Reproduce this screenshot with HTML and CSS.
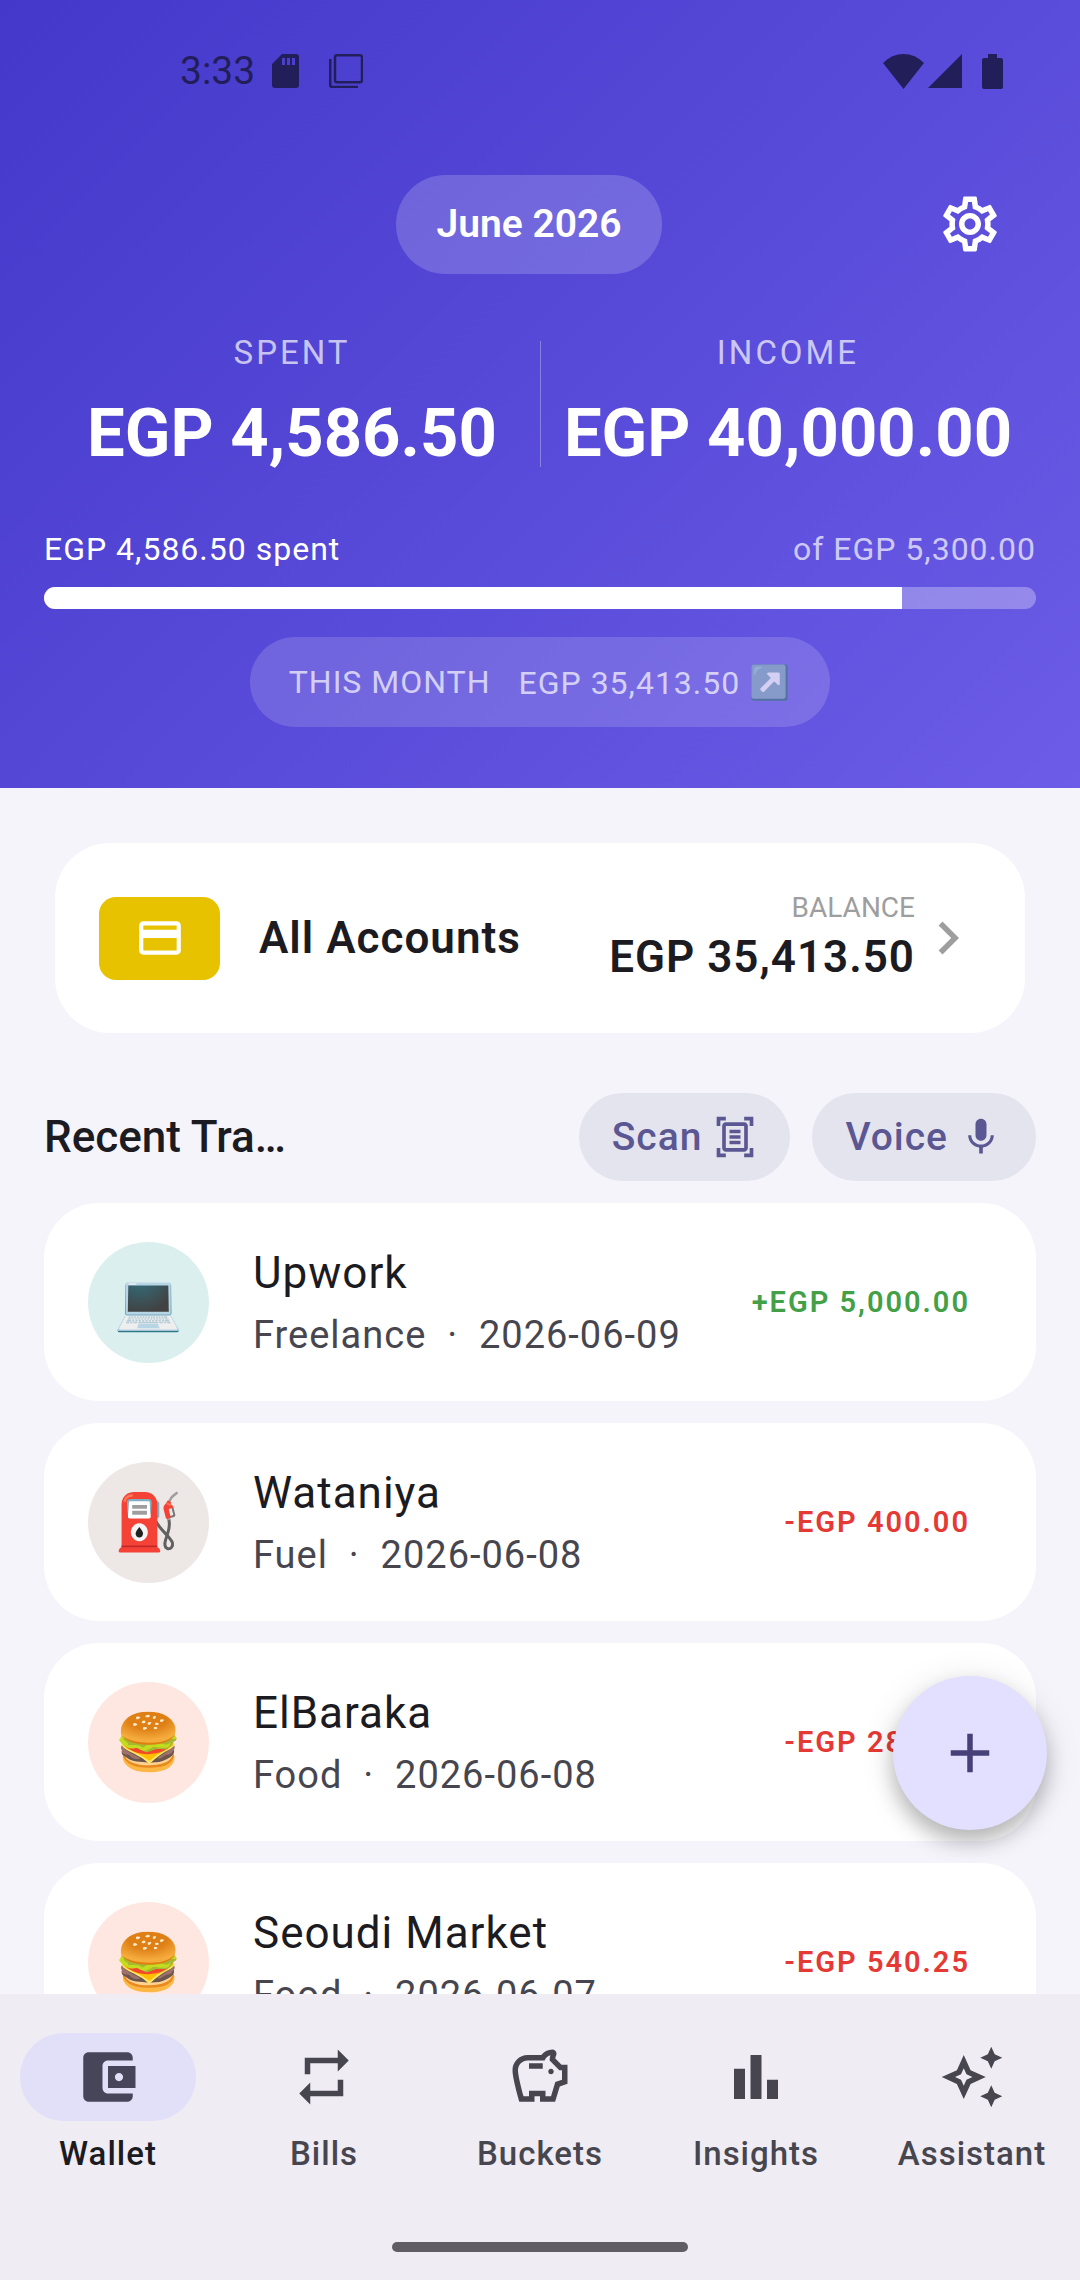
FILE: index.html
```html
<!DOCTYPE html>
<html lang="en">
<head>
<meta charset="utf-8">
<meta name="viewport" content="width=device-width, initial-scale=1">
<title>Wallet</title>
<link rel="stylesheet" href="styles.css">
</head>
<body>
<div class="app">
  <main class="scroll">
    <header class="hero">
      <div class="status">
        <div class="status-left">
          <span class="clock">3:33</span>
          <svg class="sd" viewBox="0 0 27 34" aria-hidden="true"><path fill-rule="evenodd" d="M10 0h14a3 3 0 0 1 3 3v28a3 3 0 0 1-3 3H3a3 3 0 0 1-3-3V10zM10 4v7h3V4zm5 0v7h3V4zm5 0v7h3V4z"/></svg>
          <svg class="copy" viewBox="0 0 34 34" aria-hidden="true"><path fill="none" stroke="currentColor" stroke-width="2.500" d="M8 1.250h23a2 2 0 0 1 2 2v23a2 2 0 0 1-2 2H8a2 2 0 0 1-2-2v-23a2 2 0 0 1 2-2zM1.250 5v26a2 2 0 0 0 2 2H29"/></svg>
        </div>
        <div class="status-right">
          <svg class="wifi" viewBox="0 0 41 35" aria-hidden="true"><path d="M0 9Q9 0 20.500 0T41 9L20.500 35z"/></svg>
          <svg class="signal" viewBox="0 0 34 34" aria-hidden="true"><path d="M34 0v34H0z"/></svg>
          <svg class="battery" viewBox="0 0 21 35" aria-hidden="true"><path d="M6 0h9v4h4a2 2 0 0 1 2 2v27a2 2 0 0 1-2 2H2a2 2 0 0 1-2-2V6a2 2 0 0 1 2-2h4z"/></svg>
        </div>
      </div>

      <div class="toolbar">
        <button class="month" type="button">June 2026</button>
        <button class="icon-button" type="button" aria-label="Settings">
          <svg class="icon" viewBox="0 0 24 24" aria-hidden="true"><path d="M19.430 12.980c.04-.32.07-.64.07-.98 0-.34-.03-.66-.07-.98l2.110-1.650c.19-.15.24-.42.12-.64l-2-3.460c-.09-.16-.26-.25-.44-.25-.06 0-.12.01-.17.03l-2.490 1c-.52-.4-1.080-.73-1.690-.98l-.38-2.650C14.460 2.180 14.250 2 14 2h-4c-.25 0-.46.18-.49.42l-.38 2.650c-.61.25-1.170.59-1.690.98l-2.490-1c-.06-.02-.12-.03-.18-.03-.17 0-.34.09-.43.25l-2 3.460c-.13.22-.07.49.12.64l2.110 1.650c-.04.32-.07.65-.07.98 0 .33.03.66.07.98l-2.110 1.650c-.19.15-.24.42-.12.64l2 3.460c.09.16.26.25.44.25.06 0 .12-.01.17-.03l2.490-1c.52.4 1.080.73 1.690.98l.38 2.650c.03.24.24.42.49.42h4c.25 0 .46-.18.49-.42l.38-2.650c.61-.25 1.170-.59 1.690-.98l2.490 1c.06.02.12.03.18.03.17 0 .34-.09.43-.25l2-3.460c.12-.22.07-.49-.12-.64l-2.110-1.650zm-1.980-1.710c.04.31.05.52.05.73 0 .21-.02.43-.05.73l-.14 1.130.89.7 1.080.84-.7 1.210-1.270-.51-1.040-.42-.9.68c-.43.32-.84.56-1.250.73l-1.060.43-.16 1.130-.2 1.350h-1.400l-.19-1.350-.16-1.130-1.060-.43c-.43-.18-.83-.41-1.230-.71l-.91-.7-1.060.43-1.270.51-.7-1.210 1.080-.84.89-.7-.14-1.130c-.03-.31-.05-.54-.05-.74s.02-.43.05-.73l.14-1.130-.89-.7-1.080-.84.7-1.210 1.270.51 1.040.42.9-.68c.43-.32.84-.56 1.250-.73l1.060-.43.16-1.130.2-1.350h1.390l.19 1.350.16 1.130 1.060.43c.43.18.83.41 1.230.71l.91.7 1.060-.43 1.270-.51.7 1.210-1.070.85-.89.7.14 1.130zM12 8c-2.210 0-4 1.790-4 4s1.790 4 4 4 4-1.790 4-4-1.790-4-4-4zm0 6c-1.100 0-2-.9-2-2s.9-2 2-2 2 .9 2 2-.9 2-2 2z"/></svg>
        </button>
      </div>

      <div class="totals">
        <div class="total">
          <span class="total-label">SPENT</span>
          <strong class="total-value">EGP 4,586.50</strong>
        </div>
        <div class="total">
          <span class="total-label">INCOME</span>
          <strong class="total-value">EGP 40,000.00</strong>
        </div>
      </div>

      <div class="budget">
        <div class="budget-text">
          <span>EGP 4,586.50 spent</span>
          <span class="budget-limit">of EGP 5,300.00</span>
        </div>
        <div class="bar" role="progressbar" aria-label="Budget used" aria-valuemin="0" aria-valuemax="5300" aria-valuenow="4586">
          <div class="bar-fill" style="width:86.5%"></div>
        </div>
      </div>

      <button class="summary" type="button">
        <span>THIS MONTH</span>
        <span>EGP 35,413.50 <span class="emoji">↗️</span></span>
      </button>
    </header>

    <a class="account" href="#accounts">
      <span class="account-badge">
        <svg class="icon-card" viewBox="0 0 24 24" aria-hidden="true"><path d="M20 4H4c-1.110 0-1.990.89-1.990 2L2 18c0 1.110.89 2 2 2h16c1.110 0 2-.89 2-2V6c0-1.110-.89-2-2-2zm0 14H4v-6h16v6zm0-10H4V6h16v2z"/></svg>
      </span>
      <span class="account-name">All Accounts</span>
      <span class="balance">
        <span class="balance-label">BALANCE</span>
        <span class="balance-value">EGP 35,413.50</span>
      </span>
      <svg class="icon chevron" viewBox="0 0 24 24" aria-hidden="true"><path d="M10 6L8.590 7.410 13.170 12l-4.580 4.590L10 18l6-6z"/></svg>
    </a>

    <section class="recent">
      <div class="recent-head">
        <h2 class="recent-title">Recent Tra…</h2>
        <div class="actions">
          <button class="action" type="button">Scan
            <svg class="icon-small" viewBox="0 0 24 24" aria-hidden="true"><path d="M7 3H4v3H2V1h5v2zm15 3V1h-5v2h3v3h2zM7 21H4v-3H2v5h5v-2zm13-3v3h-3v2h5v-5h-2zm-1 0c0 1.100-.9 2-2 2H7c-1.100 0-2-.9-2-2V6c0-1.100.9-2 2-2h10c1.100 0 2 .9 2 2v12zM17 6H7v12h10V6zm-2 2H9v2h6V8zm0 3H9v2h6v-2zm0 3H9v2h6v-2z"/></svg>
          </button>
          <button class="action" type="button">Voice
            <svg class="icon-small" viewBox="0 0 24 24" aria-hidden="true"><path d="M12 14c1.660 0 2.990-1.340 2.990-3L15 5c0-1.660-1.340-3-3-3S9 3.340 9 5v6c0 1.660 1.340 3 3 3zm5.300-3c0 3-2.540 5.100-5.300 5.100S6.700 14 6.700 11H5c0 3.410 2.720 6.230 6 6.720V21h2v-3.280c3.280-.48 6-3.300 6-6.720h-1.700z"/></svg>
          </button>
        </div>
      </div>

      <ul class="list">
        <li class="item">
          <span class="avatar avatar-teal">💻</span>
          <div class="item-text">
            <span class="item-name">Upwork</span>
            <span class="item-meta">Freelance&nbsp; ·&nbsp; 2026-06-09</span>
          </div>
          <span class="amount amount-in">+EGP 5,000.00</span>
        </li>
        <li class="item">
          <span class="avatar avatar-brown">⛽</span>
          <div class="item-text">
            <span class="item-name">Wataniya</span>
            <span class="item-meta">Fuel&nbsp; ·&nbsp; 2026-06-08</span>
          </div>
          <span class="amount">-EGP 400.00</span>
        </li>
        <li class="item">
          <span class="avatar avatar-orange">🍔</span>
          <div class="item-text">
            <span class="item-name">ElBaraka</span>
            <span class="item-meta">Food&nbsp; ·&nbsp; 2026-06-08</span>
          </div>
          <span class="amount">-EGP 280.00</span>
        </li>
        <li class="item">
          <span class="avatar avatar-orange">🍔</span>
          <div class="item-text">
            <span class="item-name">Seoudi Market</span>
            <span class="item-meta">Food&nbsp; ·&nbsp; 2026-06-07</span>
          </div>
          <span class="amount">-EGP 540.25</span>
        </li>
      </ul>
    </section>
  </main>

  <div class="bottom">
    <button class="fab" type="button" aria-label="Add transaction">
      <svg class="icon" viewBox="0 0 24 24" aria-hidden="true"><path d="M19 13h-6v6h-2v-6H5v-2h6V5h2v6h6z"/></svg>
    </button>
    <nav class="nav">
      <a class="tab tab-active" href="#wallet">
        <span class="pill"><svg class="icon" viewBox="0 0 24 24" aria-hidden="true"><path d="M21 18v1c0 1.100-.9 2-2 2H5c-1.110 0-2-.9-2-2V5c0-1.100.89-2 2-2h14c1.100 0 2 .9 2 2v1h-9c-1.110 0-2 .9-2 2v8c0 1.100.89 2 2 2h9zm-9-2h10V8H12v8zm4-2.500c-.83 0-1.500-.67-1.500-1.500s.67-1.500 1.500-1.500 1.500.67 1.500 1.500-.67 1.500-1.500 1.500z"/></svg></span>
        Wallet
      </a>
      <a class="tab" href="#bills">
        <span class="pill"><svg class="icon" viewBox="0 0 24 24" aria-hidden="true"><path d="M7 7h10v3l4-4-4-4v3H5v6h2V7zm10 10H7v-3l-4 4 4 4v-3h12v-6h-2v4z"/></svg></span>
        Bills
      </a>
      <a class="tab" href="#buckets">
        <span class="pill"><svg class="icon" viewBox="0 0 24 24" aria-hidden="true"><path d="M15 10c0-.55.45-1 1-1s1 .45 1 1-.45 1-1 1-1-.45-1-1zM8 9h5V7H8v2zm14-1.500v6.970l-2.820.94L17.500 21H12v-2h-2v2H4.500S2 12.540 2 9.500 4.460 4 7.500 4h5c.91-1.210 2.360-2 4-2 .83 0 1.500.67 1.500 1.500 0 .21-.04.4-.12.58-.14.34-.26.73-.32 1.150l2.270 2.270H22zm-2 2h-1L15.500 6c0-.65.09-1.290.26-1.910-.97.25-1.760.97-2.090 1.910H7.500C5.570 6 4 7.570 4 9.500c0 1.880 1.220 6.650 2.010 9.500H8v-2h6v2h2.010l1.550-5.150 2.440-.82V9.500z"/></svg></span>
        Buckets
      </a>
      <a class="tab" href="#insights">
        <span class="pill"><svg class="icon" viewBox="0 0 24 24" aria-hidden="true"><path d="M4 9h4v11H4zm12 4h4v7h-4zm-6-9h4v16h-4z"/></svg></span>
        Insights
      </a>
      <a class="tab" href="#assistant">
        <span class="pill"><svg class="icon" viewBox="0 0 24 24" aria-hidden="true"><path d="M19 9l1.250-2.750L23 5l-2.750-1.250L19 1l-1.250 2.750L15 5l2.750 1.250L19 9zm0 6l-1.250 2.750L15 19l2.750 1.250L19 23l1.250-2.750L23 19l-2.750-1.250L19 15zm-7.500-5.500L9 4 6.500 9.500 1 12l5.500 2.500L9 20l2.500-5.500L17 12l-5.500-2.500zm-1.510 3.490L9 15.170l-.99-2.180L5.830 12l2.180-.99L9 8.830l.99 2.180 2.180.99-2.180.99z"/></svg></span>
        Assistant
      </a>
    </nav>
    <div class="gesture"></div>
  </div>
</div>
</body>
</html>
```

FILE: styles.css
```css
* {
  box-sizing: border-box;
}

body {
  margin: 0;
  font-family: Roboto, "Noto Color Emoji", sans-serif;
  color: #1b1b21;
  background: #f5f4fb;
}

button {
  border: 0;
  margin: 0;
  padding: 0;
  font: inherit;
  color: inherit;
  background: none;
  cursor: pointer;
}

a {
  color: inherit;
  text-decoration: none;
}

svg {
  display: block;
  flex: none;
  fill: currentColor;
}

.icon {
  width: 66px;
  height: 66px;
}

.icon-small {
  width: 44px;
  height: 44px;
}

.icon-card {
  width: 50px;
  height: 50px;
}

.app {
  display: flex;
  flex-direction: column;
  height: 100vh;
}

.scroll {
  flex: 1;
  min-height: 0;
  overflow: hidden;
}

/* Header */
.hero {
  display: flex;
  flex-direction: column;
  padding-bottom: 61px;
  color: #fff;
  background: linear-gradient(135deg, #4338ca, #6c5ce7);
}

.status {
  display: flex;
  justify-content: space-between;
  align-items: center;
  height: 142px;
  padding: 0 77px 0 180px;
  color: #221e5a;
}

.status-left,
.status-right {
  display: flex;
  align-items: center;
}

.clock {
  font-size: 39px;
}

.sd {
  width: 27px;
  height: 34px;
  margin-left: 17px;
}

.copy {
  width: 34px;
  height: 34px;
  margin-left: 30px;
}

.wifi {
  width: 41px;
  height: 35px;
}

.signal {
  width: 34px;
  height: 34px;
  margin-left: 4px;
}

.battery {
  width: 21px;
  height: 35px;
  margin-left: 20px;
}

.toolbar {
  display: grid;
  grid-template-columns: 132px 1fr 132px;
  align-items: center;
  height: 164px;
  padding: 0 44px 0 22px;
}

.month {
  grid-column: 2;
  justify-self: center;
  height: 99px;
  padding: 0 40px;
  border-radius: 50px;
  font-size: 39px;
  font-weight: 600;
  background: rgba(255, 255, 255, 0.18);
}

.icon-button {
  display: grid;
  place-items: center;
  height: 132px;
}

.totals {
  display: flex;
  padding: 27px 44px 0;
}

.total {
  position: relative;
  flex: 1;
  display: flex;
  flex-direction: column;
  align-items: center;
  gap: 16px;
  white-space: nowrap;
}

.total + .total::before {
  content: "";
  position: absolute;
  left: 0;
  top: 8px;
  width: 1px;
  height: 126px;
  background: rgba(255, 255, 255, 0.3);
}

.total-label {
  font-size: 33px;
  line-height: 40px;
  letter-spacing: 3px;
  color: rgba(255, 255, 255, 0.7);
}

.total-value {
  font-size: 67px;
  line-height: 88px;
  font-weight: 700;
}

.budget {
  display: flex;
  flex-direction: column;
  gap: 17px;
  padding: 51px 44px 0;
}

.budget-text {
  display: flex;
  justify-content: space-between;
  font-size: 32px;
  line-height: 42px;
  letter-spacing: 1px;
}

.budget-limit {
  color: rgba(255, 255, 255, 0.7);
}

.bar {
  height: 22px;
  overflow: hidden;
  border-radius: 11px;
  background: rgba(255, 255, 255, 0.3);
}

.bar-fill {
  height: 100%;
  background: #fff;
}

.summary {
  align-self: center;
  display: flex;
  align-items: center;
  gap: 28px;
  height: 90px;
  margin-top: 28px;
  padding: 0 39px;
  border-radius: 45px;
  font-size: 32px;
  letter-spacing: 1px;
  color: rgba(255, 255, 255, 0.7);
  background: rgba(255, 255, 255, 0.15);
}

.emoji {
  font-size: 33px;
}

/* Account card */
.account {
  display: flex;
  align-items: center;
  height: 190px;
  margin: 55px 55px 60px;
  padding: 0 44px;
  border-radius: 55px;
  background: #fff;
}

.account-badge {
  display: grid;
  place-items: center;
  width: 121px;
  height: 83px;
  border-radius: 17px;
  color: #fff;
  background: #e6c200;
}

.account-name {
  flex: 1;
  padding-left: 39px;
  font-size: 44px;
  font-weight: 600;
  letter-spacing: 1px;
}

.balance {
  display: flex;
  flex-direction: column;
  align-items: flex-end;
}

.balance-label {
  font-size: 28px;
  line-height: 38px;
  color: #9e9e9e;
}

.balance-value {
  font-size: 44px;
  line-height: 60px;
  font-weight: 600;
  letter-spacing: 1px;
}

.chevron {
  color: #9e9e9e;
}

/* Recent transactions */
.recent {
  padding: 0 44px;
}

.recent-head {
  display: flex;
  align-items: center;
  justify-content: space-between;
  height: 88px;
  margin-bottom: 22px;
}

.recent-title {
  margin: 0;
  font-size: 44px;
  font-weight: 500;
}

.actions {
  display: flex;
  gap: 22px;
}

.action {
  display: flex;
  align-items: center;
  gap: 11px;
  height: 88px;
  padding: 0 33px;
  border-radius: 44px;
  font-size: 39px;
  font-weight: 500;
  letter-spacing: 1px;
  color: #5b5792;
  background: #e4e4ee;
}

.list {
  display: flex;
  flex-direction: column;
  gap: 22px;
  margin: 0;
  padding: 0 0 22px;
  list-style: none;
}

.item {
  display: flex;
  align-items: center;
  gap: 44px;
  height: 198px;
  padding: 0 66px 0 44px;
  border-radius: 55px;
  background: #fff;
}

.avatar {
  display: grid;
  place-items: center;
  flex: none;
  width: 121px;
  height: 121px;
  border-radius: 50%;
  font-size: 55px;
  line-height: 66px;
}

.avatar-teal {
  background: #dbf0ee;
}

.avatar-brown {
  background: #ede7e5;
}

.avatar-orange {
  background: #ffe7e1;
}

.item-text {
  flex: 1;
  display: flex;
  flex-direction: column;
}

.item-name {
  font-size: 44px;
  line-height: 66px;
  letter-spacing: 1px;
}

.item-meta {
  font-size: 38px;
  line-height: 58px;
  letter-spacing: 1px;
  color: #47464f;
}

.amount {
  font-size: 29px;
  font-weight: 600;
  letter-spacing: 2px;
  color: #e53935;
}

.amount-in {
  color: #43a047;
}

/* Bottom bar */
.bottom {
  position: relative;
  display: flex;
  flex-direction: column;
  height: 286px;
  padding-top: 39px;
  background: #efecf4;
}

.fab {
  position: absolute;
  right: 33px;
  bottom: 450px;
  display: grid;
  place-items: center;
  width: 154px;
  height: 154px;
  border-radius: 50%;
  color: #454178;
  background: #e2dfff;
  box-shadow: 0 12px 20px rgba(0, 0, 0, 0.24), 0 4px 36px rgba(0, 0, 0, 0.1);
}

.nav {
  display: grid;
  grid-template-columns: repeat(5, 1fr);
}

.tab {
  display: flex;
  flex-direction: column;
  align-items: center;
  gap: 11px;
  font-size: 33px;
  line-height: 44px;
  font-weight: 500;
  letter-spacing: 1px;
  color: #47464f;
}

.pill {
  display: grid;
  place-items: center;
  width: 176px;
  height: 88px;
  border-radius: 44px;
}

.tab-active {
  color: #1b1b21;
}

.tab-active .pill {
  color: #464559;
  background: #e2e0f9;
}

.gesture {
  align-self: center;
  width: 296px;
  height: 10px;
  margin: auto 0 28px;
  border-radius: 5px;
  background: #605e64;
}
```
